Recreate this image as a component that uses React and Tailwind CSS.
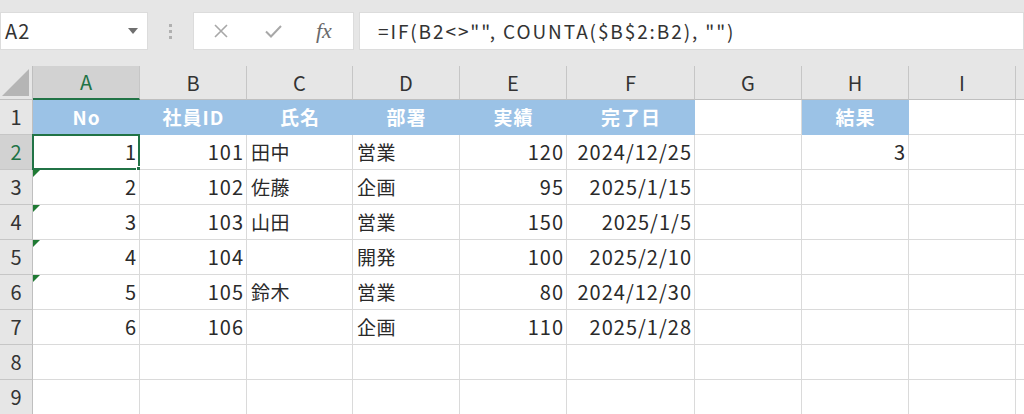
import React from "react";

const COLS = ["A", "B", "C", "D", "E", "F", "G", "H", "I", ""];
const FONT = "font-['Noto_Sans_CJK_JP','Noto_Sans',sans-serif]";

// align: r = right, l = left
const ALIGN = ["r", "r", "l", "l", "r", "r", "l", "r", "l", "l"];

const HEAD = ["No", "社員ID", "氏名", "部署", "実績", "完了日", "", "結果", "", ""];
const BLUE = [true, true, true, true, true, true, false, true, false, false];

const DATA = [
  [1, 101, "田中", "営業", 120, "2024/12/25", "", 3, "", ""],
  [2, 102, "佐藤", "企画", 95, "2025/1/15", "", "", "", ""],
  [3, 103, "山田", "営業", 150, "2025/1/5", "", "", "", ""],
  [4, 104, "", "開発", 100, "2025/2/10", "", "", "", ""],
  [5, 105, "鈴木", "営業", 80, "2024/12/30", "", "", "", ""],
  [6, 106, "", "企画", 110, "2025/1/28", "", "", "", ""],
  ["", "", "", "", "", "", "", "", "", ""],
  ["", "", "", "", "", "", "", "", "", ""],
];

function FormulaBar() {
  return (
    <div className="h-[66px] flex items-start pt-[12px]">
      <div className="w-[148px] h-[38px] bg-white border border-[#dcdcdc] flex items-center justify-between pl-[4px] pr-[9px]">
        <span className="text-[20px] text-[#333] tracking-[1px]">A2</span>
        <svg width="10" height="6" viewBox="0 0 10 6">
          <path d="M0 0 L10 0 L5 6 Z" fill="#6f6f6f" />
        </svg>
      </div>
      <div className="w-[45px] h-[38px] flex flex-col items-center justify-center gap-[3px]">
        <span className="w-[3px] h-[3px] bg-[#b0b0b0]" />
        <span className="w-[3px] h-[3px] bg-[#b0b0b0]" />
        <span className="w-[3px] h-[3px] bg-[#b0b0b0]" />
      </div>
      <div className="w-[161px] h-[38px] bg-white border border-[#dcdcdc] flex items-center">
        <svg className="ml-[20px]" width="14" height="14" viewBox="0 0 14 14">
          <path d="M1 1 L13 13 M13 1 L1 13" stroke="#a8a8a8" strokeWidth="1.6" fill="none" />
        </svg>
        <svg className="ml-[37px]" width="17" height="13" viewBox="0 0 17 13">
          <path d="M1 6.5 L6 11.5 L16 1" stroke="#a8a8a8" strokeWidth="2" fill="none" />
        </svg>
        <span className="ml-[34px] text-[22px] italic text-[#6a6a6a] font-['Liberation_Serif',serif] leading-none">
          fx
        </span>
      </div>
      <div className="ml-[5px] flex-1 h-[38px] bg-white border border-[#dcdcdc] flex items-center pl-[18px]">
        <span className="text-[19px] text-[#333] tracking-[1.9px]">=IF(B2&lt;&gt;"", COUNTA($B$2:B2), "")</span>
      </div>
    </div>
  );
}

function Cell({ v, align, children, className = "" }) {
  const num = typeof v === "number" || /^[0-9/]+$/.test(String(v));
  return (
    <div
      className={
        "relative flex items-center bg-white border-r border-b border-[#dadada] text-[#2a2a2a] whitespace-nowrap " +
        (num ? "text-[20px] tracking-[1px] pl-[4px] pr-[2px] " : "text-[19px] tracking-[0.5px] px-[4px] ") +
        (align === "r" ? "justify-end " : "justify-start ") +
        className
      }
    >
      {v}
      {children}
    </div>
  );
}

function Flag() {
  return (
    <svg className="absolute left-0 top-0" width="7" height="7" viewBox="0 0 7 7">
      <path d="M0 0 L7 0 L0 7 Z" fill="#1f7a33" />
    </svg>
  );
}

export default function App() {
  return (
    <div className={"w-[1024px] h-[414px] overflow-hidden bg-[#e6e6e6] " + FONT}>
      <FormulaBar />
      <div className="grid grid-cols-[33px_107px_107px_106px_107px_107px_128px_107px_107px_107px_1fr] grid-rows-[34px_repeat(9,35px)]">
        {/* corner */}
        <div className="relative bg-[#e6e6e6] border-r border-b border-[#bfbfbf]">
          <svg className="absolute right-[3px] bottom-[3px]" width="27" height="27" viewBox="0 0 27 27">
            <path d="M27 0 L27 27 L0 27 Z" fill="#b5b5b5" />
          </svg>
        </div>
        {COLS.map((c, i) =>
          i === 0 ? (
            <div
              key={c}
              className="flex items-center justify-center bg-[#d2d2d2] border-r border-[#c6c6c6] border-b-2 border-b-[#217346] text-[20px] text-[#217346]"
            >
              {c}
            </div>
          ) : (
            <div
              key={"h" + i}
              className="flex items-center justify-center bg-[#e6e6e6] border-r border-b border-[#c6c6c6] border-b-[#bfbfbf] text-[20px] text-[#333]"
            >
              {c}
            </div>
          )
        )}

        {/* row 1 */}
        <div className="flex items-center justify-center bg-[#e6e6e6] border-r border-b border-[#c6c6c6] border-r-[#bfbfbf] text-[20px] text-[#333]">
          1
        </div>
        {HEAD.map((h, i) =>
          BLUE[i] ? (
            <div
              key={"t" + i}
              className="flex items-center justify-center bg-[#9bc2e6] border-b border-[#9bc2e6] text-[19px] tracking-[1px] font-bold text-white"
            >
              {h}
            </div>
          ) : (
            <Cell key={"t" + i} v="" align="l" />
          )
        )}

        {/* data rows */}
        {DATA.map((row, r) => (
          <React.Fragment key={"r" + r}>
            <div
              className={
                "flex items-center justify-center border-r border-b border-[#c6c6c6] border-r-[#bfbfbf] text-[20px] " +
                (r === 0 ? "bg-[#d2d2d2] text-[#217346]" : "bg-[#e6e6e6] text-[#333]")
              }
            >
              {r + 2}
            </div>
            {row.map((v, i) => (
              <Cell key={i} v={v} align={ALIGN[i]}>
                {i === 0 && r === 0 && (
                  <>
                    <div className="absolute left-[-1px] top-[-1px] right-[-1px] bottom-[-1px] border-2 border-[#217346] pointer-events-none" />
                    <div className="absolute right-[-4px] bottom-[-4px] w-[7px] h-[7px] bg-[#217346] border border-white" />
                  </>
                )}
                {i === 0 && r >= 1 && r <= 4 && <Flag />}
              </Cell>
            ))}
          </React.Fragment>
        ))}
      </div>
    </div>
  );
}
